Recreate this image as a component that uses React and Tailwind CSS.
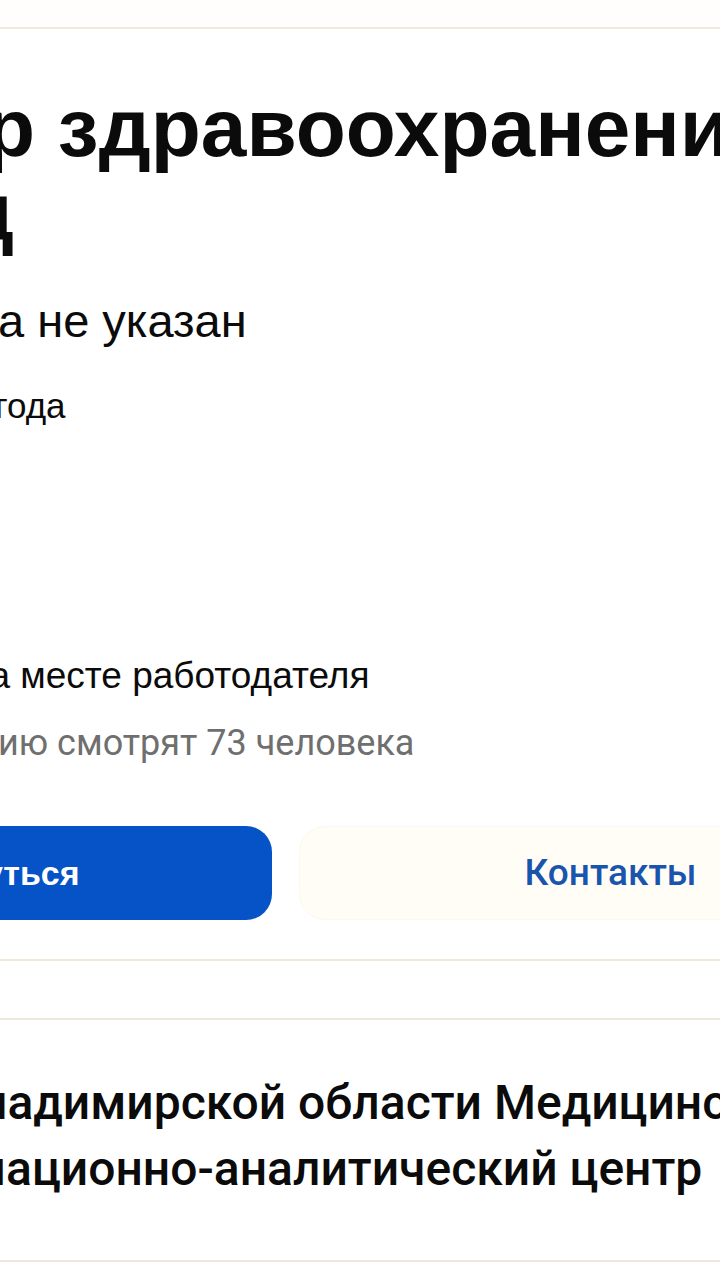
export default function App() {
  return (
    <div className="w-[720px] h-[1280px] overflow-hidden bg-white text-[#0b0b0b] font-['Liberation_Sans',Arial,sans-serif]">
      <div className="h-[29px] bg-[#fffefc] border-b-2 border-[#f1e8dc]" />

      <h1 className="mt-[57px] font-bold text-[82px] leading-[84px] whitespace-nowrap">
        <div className="-ml-[15px]">р здравоохранения</div>
        <div className="-ml-[38px]">д</div>
      </h1>

      <div className="mt-[41px] text-[47px] leading-[52px] whitespace-nowrap -ml-[2px]">а не указан</div>

      <div className="mt-[39px] text-[35px] leading-[40px] whitespace-nowrap -ml-[5px]">года</div>

      <div className="mt-[230px] text-[37px] leading-[40px] whitespace-nowrap -ml-[31px]">на месте работодателя</div>

      <div className="mt-[27px] text-[36px] leading-[40px] whitespace-nowrap text-[#6f6f6f] font-['Roboto',sans-serif] -ml-[2px]">
        ию смотрят 73 человека
      </div>

      <div className="mt-[63px] -ml-[349px] w-[1271px] h-[94px] flex gap-[27px]">
        <button className="flex-1 rounded-[26px] bg-[#0653c7] text-white font-bold text-[34px] flex items-center justify-center">
          Откликнуться
        </button>
        <button className="flex-1 rounded-[26px] bg-[#fffdf6] border border-[#fcf8ee] text-[#1a55ad] font-['Roboto',sans-serif] font-medium text-[37px] flex items-center justify-center">
          Контакты
        </button>
      </div>

      <div className="mt-[39px] h-[61px] border-y-2 border-[#f1e8dc] bg-white" />

      <div className="mt-[50px] font-['Roboto',sans-serif] font-medium text-[48px] leading-[66px] whitespace-nowrap">
        <div className="-ml-[20px]">ладимирской области Медицинский</div>
        <div className="-ml-[30px]">мационно-аналитический центр</div>
      </div>

      <div className="mt-[58px] border-t-2 border-[#f1e8dc]" />
    </div>
  );
}
